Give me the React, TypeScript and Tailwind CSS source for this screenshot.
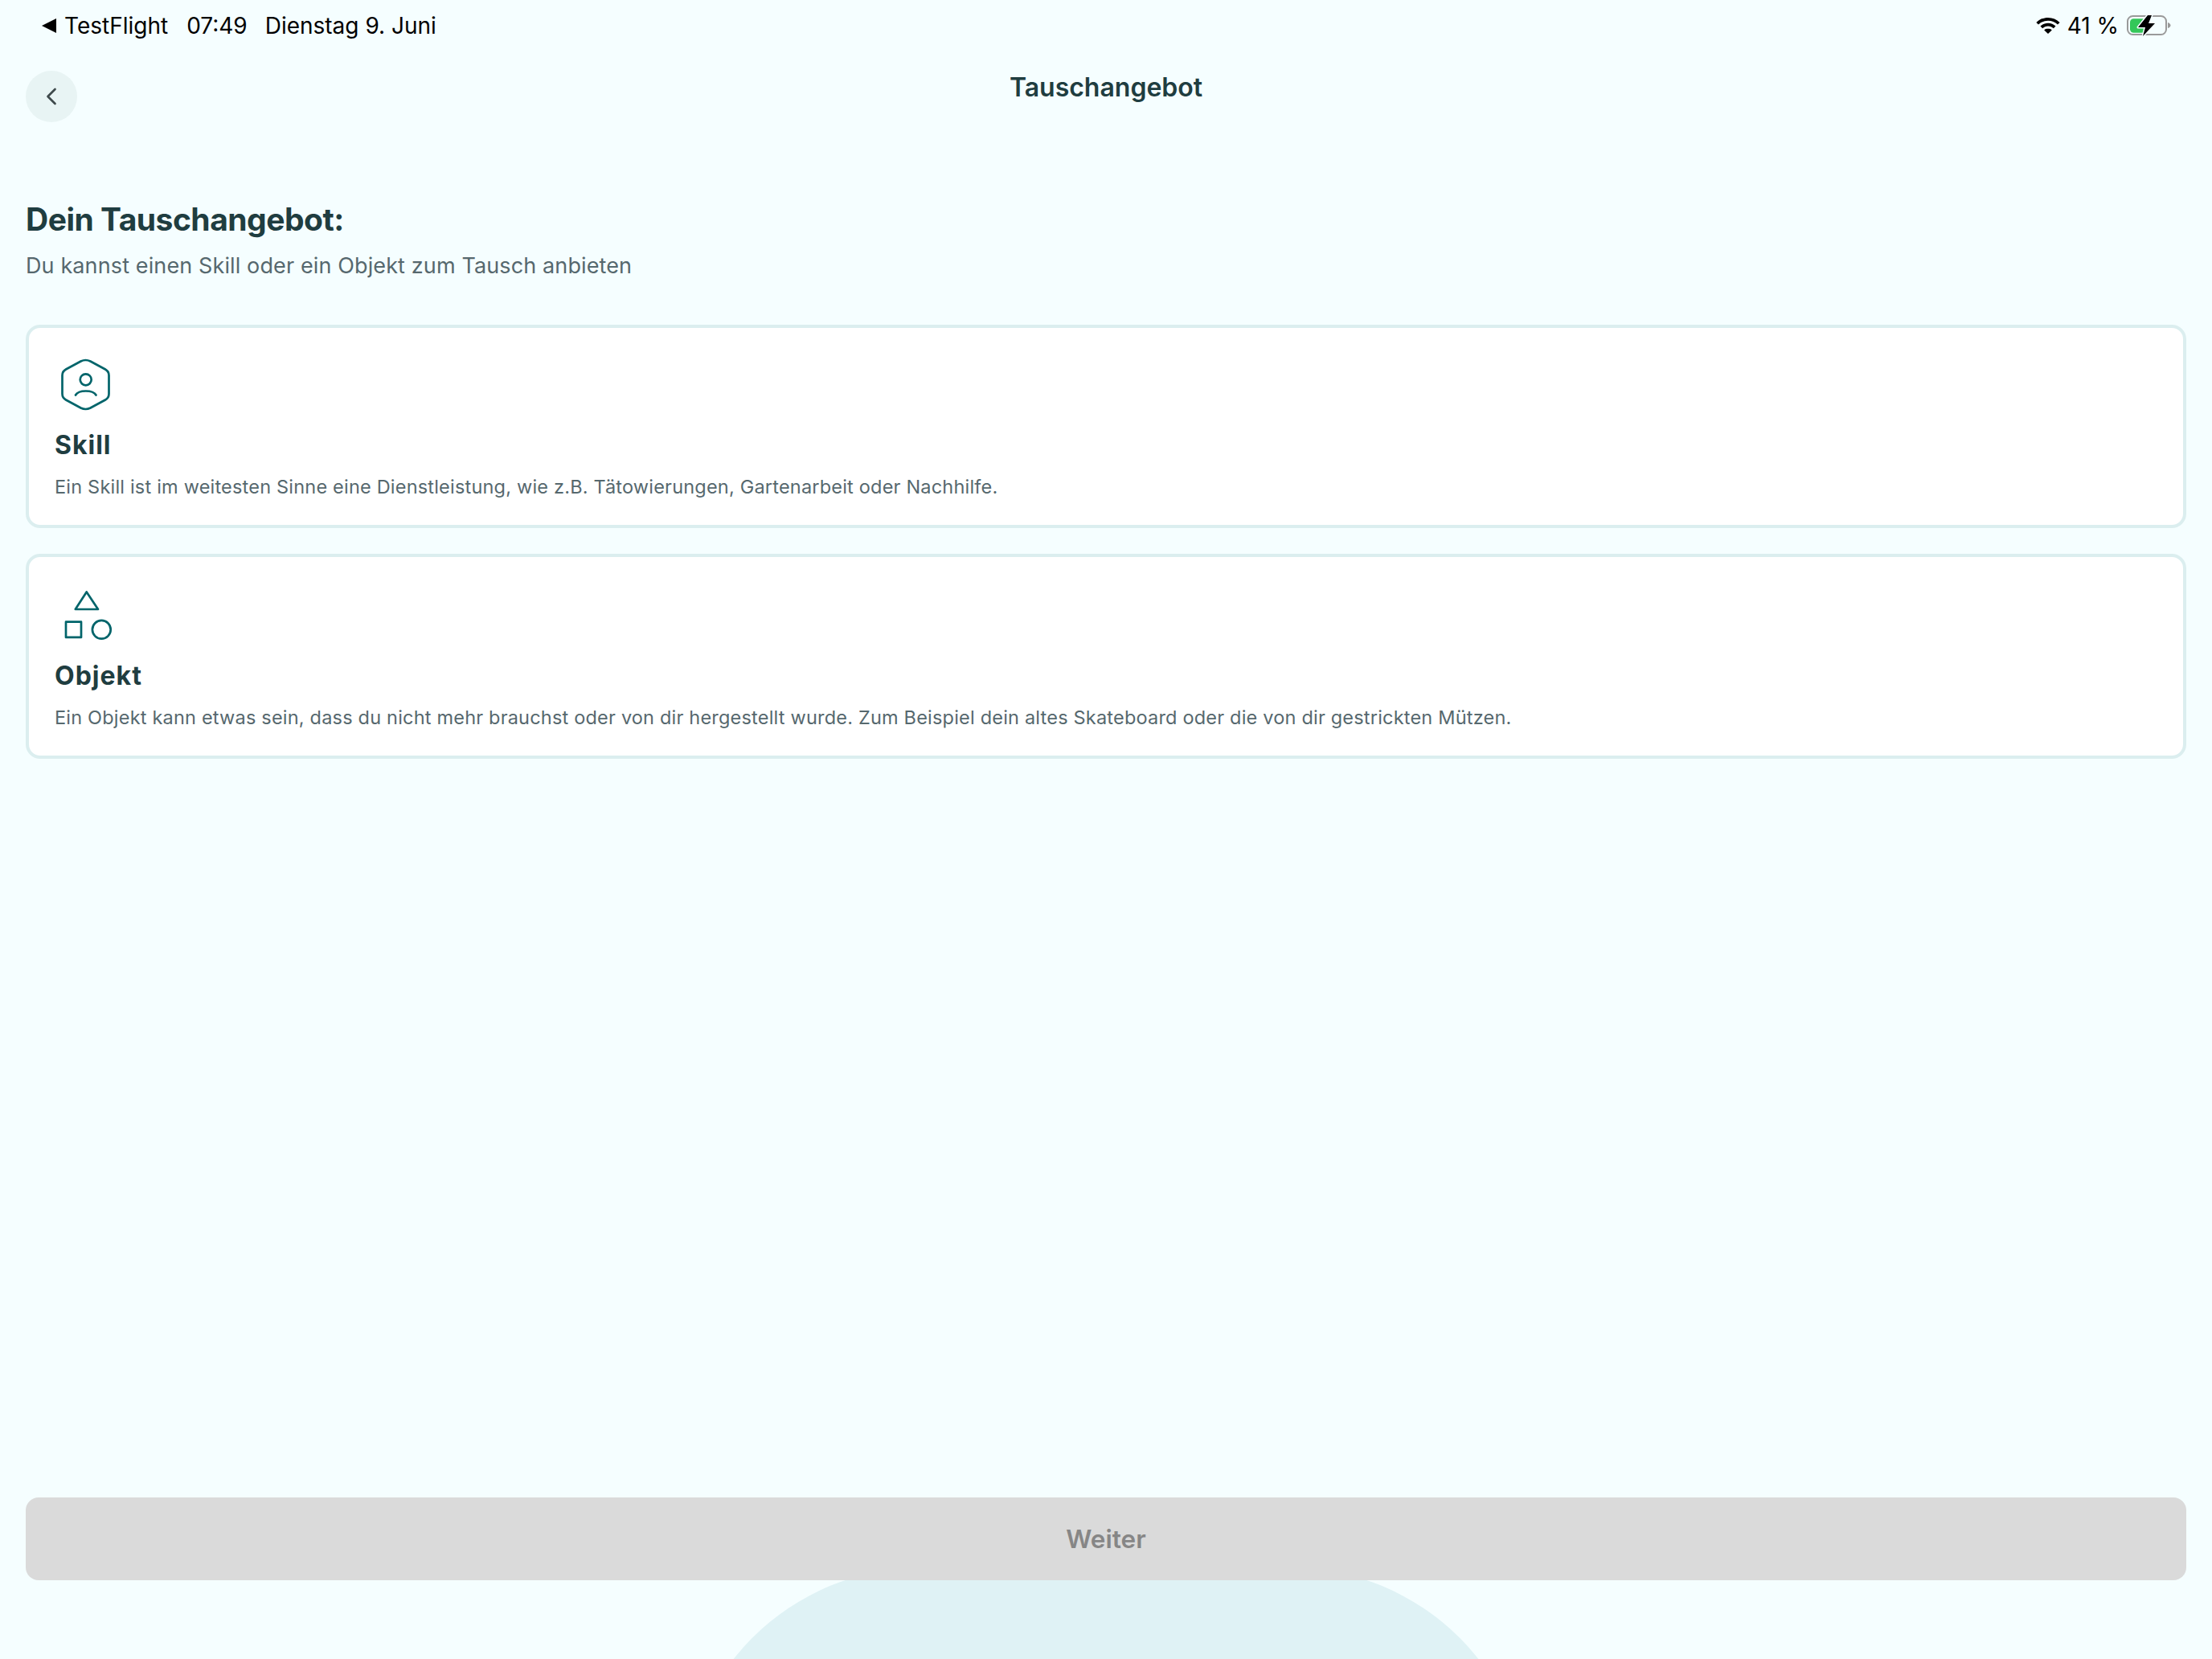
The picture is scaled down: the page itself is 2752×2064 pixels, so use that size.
import { ChevronLeft } from "lucide-react";

function HexUserIcon() {
  return (
    <svg viewBox="0 0 72 70" className="ml-[1px] h-[70px] w-[72px]" fill="none" stroke="#00646a" strokeWidth="2.7" strokeLinecap="round" strokeLinejoin="round">
      <path d="M31.5 6.5Q37.5 3.5 43.5 6.5L62 16.5Q66.5 19 66.5 24V47Q66.5 52 62 54.5L43.5 64.5Q37.5 67.5 31.5 64.5L13 54.5Q8.5 52 8.5 47V24Q8.5 19 13 16.5Z" />
      <circle cx="37.7" cy="29.3" r="7" />
      <path d="M25 48.5C27 45 31 43.5 37.7 43.5C44.4 43.5 48.5 45 50.5 48.5" />
    </svg>
  );
}

function ShapesIcon() {
  return (
    <svg viewBox="0 0 72 72" className="ml-[1px] h-[72px] w-[72px]" fill="none" stroke="#00646a" strokeWidth="2.7" strokeLinejoin="round">
      <path d="M38.7 8.5L53 30H24.8Z" />
      <rect x="13" y="45.7" width="19" height="19.2" />
      <circle cx="57.3" cy="55.3" r="11.4" />
    </svg>
  );
}

function WifiIcon() {
  return (
    <svg viewBox="0 0 30 20" className="h-[20px] w-[30px]" fill="#000">
      <path d="M15 0C9.3 0 4.2 2.2 .4 5.9l2.6 2.7C6.1 5.6 10.3 3.7 15 3.7s8.9 1.9 12 4.9l2.6-2.7C25.8 2.2 20.7 0 15 0Z" />
      <path d="M15 6.8c-3.7 0-7 1.4-9.5 3.8l2.6 2.7C9.9 11.6 12.3 10.5 15 10.5s5.1 1.1 6.9 2.8l2.6-2.7C22 8.2 18.7 6.8 15 6.8Z" />
      <path d="M15 13.5c-1.9 0-3.6.7-4.8 1.9L15 20l4.8-4.6c-1.2-1.2-2.9-1.9-4.8-1.9Z" />
    </svg>
  );
}

function BatteryIcon() {
  return (
    <svg viewBox="0 0 56 28" className="h-[28px] w-[56px]">
      <rect x="1" y="2" width="48" height="23" rx="6.5" fill="none" stroke="#9a9a9a" strokeWidth="2" />
      <path d="M51 10c2 .5 3.500 2 3.500 3.500S53 16.500 51 17Z" fill="#9a9a9a" />
      <rect x="4" y="5.300" width="20" height="17.400" rx="4.500" fill="#34c759" />
      <path d="M26 1H31L27 11H35L20 27L23 16H14Z" fill="#000" stroke="#f5feff" strokeWidth="3" strokeLinejoin="round" paintOrder="stroke" />
    </svg>
  );
}

function OptionCard({ icon, title, text }: { icon: React.ReactNode; title: string; text: string }) {
  return (
    <div className="rounded-[18px] border-4 border-[#dbeeef] bg-white px-[32px] pb-[31px] pt-[35px]">
      {icon}
      <h2 className="mt-[21px] text-[32px] font-bold leading-[40px] tracking-[1px] text-[#1f3d40]">{title}</h2>
      <p className="mt-[16px] text-[23.5px] leading-[32px] tracking-[0.2px] text-[#56686e]">{text}</p>
    </div>
  );
}

export default function App() {
  return (
    <div className="relative flex h-[2064px] w-[2752px] flex-col overflow-hidden bg-[#f5feff] font-['Inter',sans-serif]">
      {/* status bar */}
      <div className="flex h-[64px] items-center justify-between pl-[52px] pr-[50px] text-[28px] text-black">
        <div className="flex items-center">
          <svg viewBox="0 0 18 18" className="mr-[10px] h-[18px] w-[18px]" fill="#000">
            <path d="M18 0V18L0 9Z" />
          </svg>
          <span>TestFlight</span>
          <span className="ml-[23px]">07:49</span>
          <span className="ml-[22px]">Dienstag 9. Juni</span>
        </div>
        <div className="flex items-center">
          <WifiIcon />
          <span className="ml-[9px]">41 %</span>
          <span className="ml-[10px]"><BatteryIcon /></span>
        </div>
      </div>

      {/* header */}
      <div className="mt-[24px] grid grid-cols-[64px_1fr_64px] items-start px-[32px]">
        <button className="flex h-[64px] w-[64px] items-center justify-center rounded-full bg-[#e8f4f4] text-[#3f4a4c]">
          <ChevronLeft size={36} strokeWidth={1.8} />
        </button>
        <h1 className="text-center text-[32px] font-semibold leading-[42px] text-[#1f3d40]">Tauschangebot</h1>
        <div />
      </div>

      {/* content */}
      <div className="mt-[97px] px-[32px]">
        <h2 className="text-[39px] font-bold leading-[48px] tracking-[-0.5px] text-[#1f3d40]">Dein Tauschangebot:</h2>
        <p className="mt-[16px] text-[27px] leading-[36px] tracking-[0.12px] text-[#56686e]">Du kannst einen Skill oder ein Objekt zum Tausch anbieten</p>
        <div className="mt-[55px] flex flex-col gap-[32px]">
          <OptionCard
            icon={<HexUserIcon />}
            title="Skill"
            text="Ein Skill ist im weitesten Sinne eine Dienstleistung, wie z.B. Tätowierungen, Gartenarbeit oder Nachhilfe."
          />
          <OptionCard
            icon={<ShapesIcon />}
            title="Objekt"
            text="Ein Objekt kann etwas sein, dass du nicht mehr brauchst oder von dir hergestellt wurde. Zum Beispiel dein altes Skateboard oder die von dir gestrickten Mützen."
          />
        </div>
      </div>

      {/* footer */}
      <div className="mt-auto px-[32px] pb-[98px]">
        <button className="relative z-10 h-[103px] w-full rounded-[16px] bg-[#dadada] text-[31.5px] font-semibold text-[#868686]">Weiter</button>
      </div>
      <div className="absolute left-[848px] top-[1950px] h-[300px] w-[1056px] rounded-t-[300px] bg-[#dff2f5]" />
    </div>
  );
}
